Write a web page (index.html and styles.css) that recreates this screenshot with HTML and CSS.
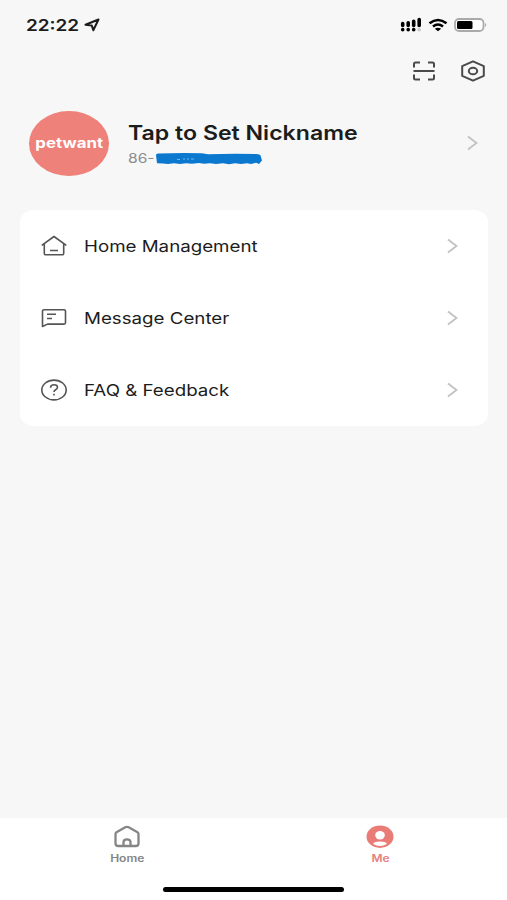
FILE: index.html
```
<!DOCTYPE html>
<html lang="en">
<head>
    <meta charset="UTF-8">
    <meta name="viewport" content="width=device-width, initial-scale=1.0">
    <title>Me</title>
    <link rel="stylesheet" href="styles.css">
</head>
<body>
    <!-- status bar -->
    <div class="status">
        <span class="time"><span class="wide">22:22</span></span>
        <svg class="location" width="18" height="16" viewBox="0 0 18 16">
            <path d="M1.500 7.800L14.500 2.500L9.300 13.300L7.800 8.600Z"/>
        </svg>
        <div class="status-right">
            <svg width="22" height="16" viewBox="0 0 22 16">
                <path class="signal" d="M2.700 6.500v2M8.200 5.700v2.800M13.700 4.200v4.300M19.200 2.500v6"/>
                <path class="signal" d="M2.700 12.500v.3M8.200 12.500v.3M13.700 12.500v.3"/>
                <path class="signal off" d="M19.200 12.500v.3"/>
            </svg>
            <svg width="20" height="16" viewBox="0 0 20 16">
                <path class="wifi" d="M1.500 6.300Q10 -.3 18.500 6.300M5 9.500Q10 5.500 15 9.500"/>
                <path d="M6.800 11.700Q10 9.700 13.200 11.700L10 14.200Z"/>
            </svg>
            <svg width="34" height="16" viewBox="0 0 34 16">
                <rect class="battery" x="1" y="2" width="28.500" height="12" rx="4"/>
                <rect x="3" y="4" width="15.500" height="8" rx="1.500"/>
                <path class="battery-tip" d="M31 6q2.500 2 0 4z"/>
            </svg>
        </div>
    </div>

    <!-- scan and settings -->
    <div class="tools">
        <svg class="line" width="24" height="20" viewBox="0 0 24 20">
            <path d="M2 6.500V3q0-1.500 1.500-1.500H8M16 1.500h4.500Q22 1.500 22 3v3.500M2 13.500V17q0 1.500 1.500 1.500H8M16 18.500h4.500q1.500 0 1.500-1.500v-3.500M1.500 10h21"/>
        </svg>
        <svg class="line" width="26" height="22" viewBox="0 0 26 22">
            <path d="M13 1.300L23.800 6.200V15.800L13 20.700L2.200 15.800V6.200Z"/>
            <ellipse cx="13" cy="11" rx="4.200" ry="3.300"/>
        </svg>
    </div>

    <!-- user info -->
    <div class="profile">
        <div class="avatar"><span class="wide">petwant</span></div>
        <div class="info">
            <div class="nickname"><span class="wide">Tap to Set Nickname</span></div>
            <div class="phone">
                <span class="wide">86-</span>
                <svg width="107" height="13" viewBox="0 0 107 13">
                    <path d="M1 3Q1 1.500 3 1.500Q28 .5 47 1.300L53 2.300Q75 1.300 101 2Q106 2 106 5L107 8.500L104 12L101 10.800L96 12L92 11.200L86 12L80 11.200L74 12.200L68 11.200L61 12L55 11.200L49 11.800L44 11L37 11.800L31 11.200L25 12L19 11.300L13 12L8 11.500L2 11.300Z"/>
                    <path class="gap" d="M22 7.500h3M28 7h2M32 7h2M36 7h3"/>
                </svg>
            </div>
        </div>
        <svg class="arrow" width="11" height="16" viewBox="0 0 11 16"><path d="M1 1.500L9.500 8L1 14.500"/></svg>
    </div>

    <!-- menu -->
    <ul class="menu">
        <li>
            <svg class="icon" width="26" height="22" viewBox="0 0 26 22">
                <path d="M.7 10.300L13 1.500L25.300 10.300M3.300 8.700V18.500Q3.300 19.800 4.600 19.800H21.400Q22.700 19.800 22.700 18.500V8.700M9 15.500h8"/>
            </svg>
            <span class="label wide">Home Management</span>
            <svg class="arrow" width="11" height="16" viewBox="0 0 11 16"><path d="M1 1.500L9.500 8L1 14.500"/></svg>
        </li>
        <li>
            <svg class="icon" width="26" height="22" viewBox="0 0 26 22">
                <path d="M1.500 19.500V4Q1.500 2.700 3 2.700H23Q24.500 2.700 24.500 4V15.800Q24.500 17.100 23 17.100H6.500ZM6 7.200h9M6 11.500h5"/>
            </svg>
            <span class="label wide">Message Center</span>
            <svg class="arrow" width="11" height="16" viewBox="0 0 11 16"><path d="M1 1.500L9.500 8L1 14.500"/></svg>
        </li>
        <li>
            <svg class="icon" width="26" height="22" viewBox="0 0 26 22">
                <ellipse cx="13" cy="11" rx="12.200" ry="9.900"/>
                <path d="M9.500 8.700Q9.700 5.700 13 5.700Q16.500 5.700 16.500 8.300Q16.500 9.700 14.600 10.700Q13 11.500 13 13M13 14.800v1.600"/>
            </svg>
            <span class="label wide">FAQ &amp; Feedback</span>
            <svg class="arrow" width="11" height="16" viewBox="0 0 11 16"><path d="M1 1.500L9.500 8L1 14.500"/></svg>
        </li>
    </ul>

    <!-- bottom tabs -->
    <div class="tabbar">
        <div class="tabs">
            <div class="tab">
                <svg class="home" width="28" height="24" viewBox="0 0 28 24">
                    <path d="M2.500 9Q2.500 7.800 3.500 7.200L12.300 2.300Q14 1.400 15.700 2.300L24.500 7.200Q25.500 7.800 25.500 9V18.500Q25.500 21 22.800 21H5.200Q2.500 21 2.500 18.500Z"/>
                    <path d="M10.500 21V17.200Q10.500 14.300 14 14.300Q17.500 14.300 17.500 17.200V21"/>
                </svg>
                <span class="wide">Home</span>
            </div>
            <div class="tab active">
                <svg width="28" height="24" viewBox="0 0 28 24">
                    <ellipse class="pink" cx="14" cy="11.700" rx="13.500" ry="11.200"/>
                    <ellipse class="white" cx="14" cy="10.200" rx="4.800" ry="4.200"/>
                    <path class="white" d="M7 18.700Q8.500 16.400 14 16.400Q19.500 16.400 21 18.700Q18 21 14 21Q10 21 7 18.700Z"/>
                </svg>
                <span class="wide">Me</span>
            </div>
        </div>
        <div class="indicator"></div>
    </div>
</body>
</html>
```
FILE: styles.css
```
*{
    margin: 0;
    padding: 0;
    box-sizing: border-box;
}
body{
    height: 900px;
    display: flex;
    flex-direction: column;
    background-color: #f7f7f7;
    color: #1c1c1c;
    font-family: Inter, "Liberation Sans", sans-serif;
    overflow: hidden;
}
svg{
    display: block;
    flex: none;
}
/* wide letters */
.wide{
    display: inline-block;
    white-space: nowrap;
    transform: scaleX(1.2);
    transform-origin: left center;
}

.status{
    height: 50px;
    display: flex;
    align-items: center;
    padding: 0 19px 0 26px;
}
.time{
    width: 58px;
    font-size: 16px;
    font-weight: 600;
}
.time .wide{
    transform: scaleX(1.18);
}
.location{
    fill: none;
    stroke: #1c1c1c;
    stroke-width: 2;
    stroke-linejoin: round;
}
.status-right{
    display: flex;
    gap: 6px;
    margin-left: auto;
}
.signal{
    stroke: #000;
    stroke-width: 3.6;
    stroke-linecap: round;
}
.off{
    stroke: #ccc;
}
.wifi{
    fill: none;
    stroke: #000;
    stroke-width: 2.6;
}
.battery{
    fill: #fff;
    stroke: #aaa;
    stroke-width: 1.8;
}
.battery-tip{
    fill: #aaa;
}

.tools{
    height: 42px;
    display: flex;
    justify-content: flex-end;
    align-items: center;
    gap: 24px;
    padding-right: 21px;
}
.line{
    fill: none;
    stroke: #4a4a4a;
    stroke-width: 2;
    stroke-linejoin: round;
}

.profile{
    height: 118px;
    display: flex;
    align-items: center;
    padding: 0 29px 16px 29px;
}
.avatar{
    width: 80px;
    height: 65px;
    display: flex;
    justify-content: center;
    align-items: center;
    padding-bottom: 2px;
    border-radius: 50%;
    background-color: #ee817a;
    color: #fff;
    font-size: 14px;
    font-weight: 700;
}
.avatar .wide, .tab .wide{
    transform-origin: center;
}
.info{
    flex: 1;
    padding: 2px 0 0 19px;
}
.nickname{
    font-size: 19.5px;
    font-weight: 600;
    line-height: 26px;
}
.nickname .wide{
    transform: scaleX(1.185);
}
.phone{
    height: 20px;
    display: flex;
    align-items: center;
    gap: 5px;
    margin-top: 2px;
    color: #8c8c8c;
    font-size: 13px;
}
.phone svg{
    fill: #0b78d0;
}
.gap{
    stroke: #6fb3ea;
}
.arrow{
    fill: none;
    stroke: #c4c4c4;
    stroke-width: 2;
}

.menu{
    height: 216px;
    margin: 0 19px 0 20px;
    border-radius: 14px / 12px;
    background-color: #fff;
    list-style: none;
}
.menu li{
    height: 72px;
    display: flex;
    align-items: center;
    padding: 0 30px 0 21px;
}
.icon{
    fill: none;
    stroke: #555;
    stroke-width: 1.6;
    stroke-linejoin: round;
}
.label{
    margin-left: 17px;
    font-size: 16px;
    transform: scaleX(1.17);
}
.menu .arrow{
    margin-left: auto;
}

.tabbar{
    height: 82px;
    margin-top: auto;
    background-color: #fff;
}
.tabs{
    height: 69px;
    display: flex;
}
.tab{
    flex: 1;
    display: flex;
    flex-direction: column;
    align-items: center;
    padding-top: 7px;
    color: #858585;
    font-size: 10px;
    font-weight: 600;
    line-height: 18px;
}
.home{
    fill: none;
    stroke: #858585;
    stroke-width: 2.3;
}
.active{
    color: #e5817e;
}
.pink{
    fill: #e97c76;
}
.white{
    fill: #fff;
}
.indicator{
    width: 181px;
    height: 5px;
    margin: 0 auto;
    border-radius: 3px;
    background-color: #000;
}
```
